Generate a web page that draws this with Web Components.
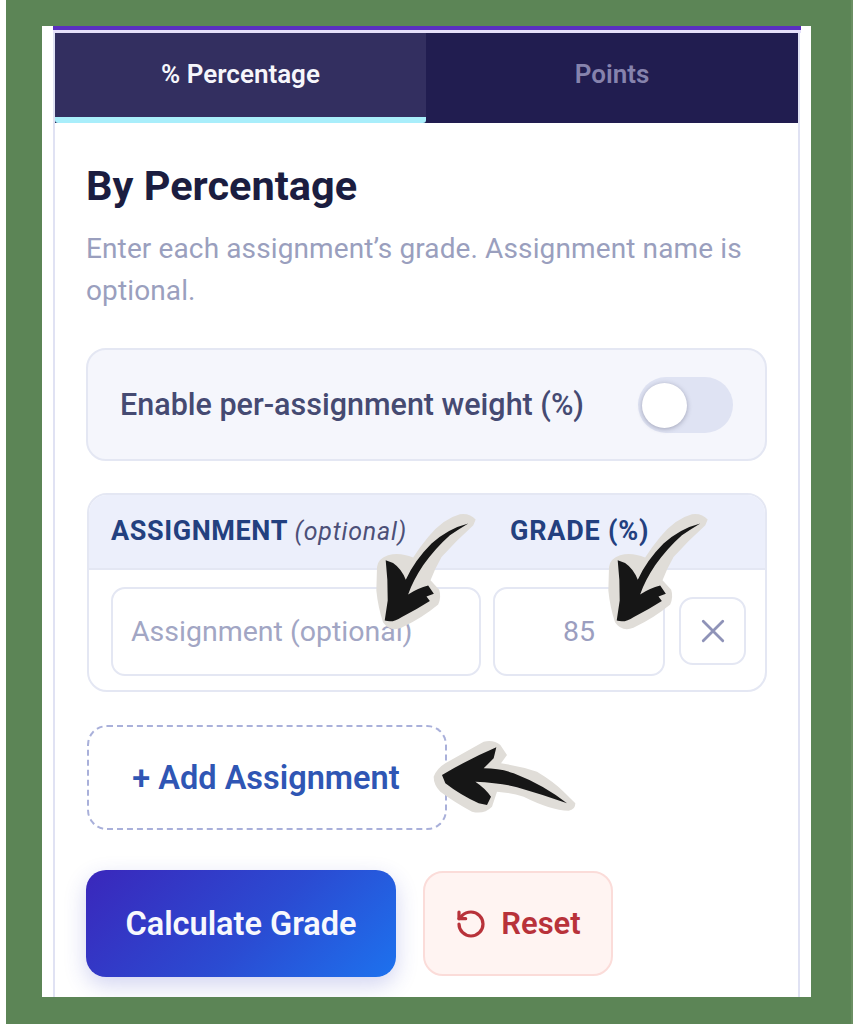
<!DOCTYPE html>
<html>
<head>
<meta charset="utf-8">
<title>Grade calculator</title>
<style>
  html, body { margin: 0; padding: 0; background: #5c8556; }
  body { width: 853px; height: 1024px; overflow: hidden; font-family: Roboto, "Liberation Sans", sans-serif; }
</style>
</head>
<body>
<photo-frame>
  <grade-card>
    <grade-tabs></grade-tabs>
    <percent-panel>
      <weight-toggle></weight-toggle>
      <assignment-table></assignment-table>
      <add-assignment></add-assignment>
      <grade-actions></grade-actions>
    </percent-panel>
  </grade-card>
  <scrawl-arrow kind="down" style="left:367px;top:510px"></scrawl-arrow>
  <scrawl-arrow kind="down" style="left:599px;top:510px"></scrawl-arrow>
  <scrawl-arrow kind="left" style="left:426px;top:740px"></scrawl-arrow>
</photo-frame>

<script>
// small helper, every element below just sets its own shadow html
class Base extends HTMLElement {
  constructor() {
    super();
    this.attachShadow({ mode: 'open' });
    this.shadowRoot.innerHTML = this.markup();
  }
}

// green photo border + white sheet
class PhotoFrame extends Base {
  markup() {
    return `<style>
      :host { display: block; position: relative; box-sizing: border-box; width: 853px; height: 1024px;
              border-left: 6px solid #fff; border-right: 2px solid #6b8f63; padding: 26px 40px 27px 36px; background: #5c8556; }
      .sheet { height: 100%; box-sizing: border-box; background: #fff; padding: 0 10px 0 11px; overflow: hidden; }
    </style><div class="sheet"><slot></slot></div>`;
  }
}

class GradeCard extends Base {
  markup() {
    return `<style>
      :host { display: block; height: 100%; }
      .bar { height: 4px; background: #5a2fc0; }
      .line { height: 3px; background: #e6e0fa; }
      .card { margin-right: 1px; height: 100%; box-sizing: border-box; border-left: 2px solid #e0e2f3; border-right: 2px solid #e0e2f3; background: #fff; }
    </style><div class="bar"></div><div class="line"></div><div class="card"><slot></slot></div>`;
  }
}

class GradeTabs extends Base {
  markup() {
    return `<style>
      :host { display: grid; grid-template-columns: 371px 1fr; height: 90px; background: #211d50; font-size: 26px; font-weight: 600; }
      div { display: flex; align-items: center; justify-content: center; box-sizing: border-box; }
      .active { background: #332f60; color: #f6f6fb; border-bottom: 6px solid #a9eefb; border-radius: 0 0 3px 3px; padding-bottom: 2px; }
      .other { color: #8683ad; padding-bottom: 8px; }
    </style><div class="active">% Percentage</div><div class="other">Points</div>`;
  }
}

class PercentPanel extends Base {
  markup() {
    return `<style>
      :host { display: block; padding: 38px 31px 0; color: #1b1d40; }
      h2 { margin: 0; font-size: 41.5px; line-height: 50px; font-weight: 700; }
      p { margin: 17px 0 36px; font-size: 28px; letter-spacing: .12px; line-height: 42px; color: #9a9fbe; }
      .stack { display: flex; flex-direction: column; }
    </style>
    <h2>By Percentage</h2>
    <p>Enter each assignment’s grade. Assignment name is optional.</p>
    <div class="stack"><slot></slot></div>`;
  }
}

class WeightToggle extends Base {
  markup() {
    return `<style>
      :host { display: flex; align-items: center; justify-content: space-between; box-sizing: border-box; height: 113px;
              border: 2px solid #e4e7f3; border-radius: 20px; background: #f5f6fc; padding: 0 32px 0 32px; }
      span { font-size: 30.5px; font-weight: 500; color: #454a72; }
      .track { position: relative; width: 95px; height: 56px; border-radius: 28px; background: #dfe3f3; }
      .knob { position: absolute; left: 4px; top: 6px; width: 45px; height: 45px; border-radius: 50%; background: #fff; box-shadow: 0 1px 5px rgba(40,40,70,.35); }
    </style><span>Enable per-assignment weight (%)</span><div class="track"><div class="knob"></div></div>`;
  }
}

class AssignmentTable extends Base {
  markup() {
    return `<style>
      :host { display: block; box-sizing: border-box; margin: 32px 0 33px 1px; height: 199px; border: 2px solid #e4e7f3; border-radius: 20px; overflow: hidden; background: #fff; }
      .cols { display: grid; grid-template-columns: 370px 172px 69px; column-gap: 12px; padding-left: 22px; }
      .head { height: 75px; box-sizing: border-box; padding-bottom: 2px; background: #eceffb; border-bottom: 2px solid #e4e7f3; align-items: center; font-size: 27px; font-weight: 700; color: #23407f; letter-spacing: .6px; }
      .head i { font-weight: 400; font-size: 25px; color: #4c5078; letter-spacing: .8px; }
      .head .grade { padding-left: 17px; letter-spacing: .8px; white-space: nowrap; }
      .row { padding-top: 17px; align-items: start; column-gap: 12px; }
      .box { box-sizing: border-box; height: 89px; border: 2px solid #e4e7f3; border-radius: 14px; display: flex; align-items: center; font-size: 28.5px; color: #a2a6c4; white-space: nowrap; }
      .name { padding-left: 18px; }
      .num { justify-content: center; color: #9b9ebf; }
      .del { height: 68px; margin: 10px 0 0 2px; justify-content: center; }
      svg { width: 26px; height: 26px; stroke: #8f93b8; stroke-width: 2.6; fill: none; stroke-linecap: round; }
    </style>
    <div class="cols head"><div>ASSIGNMENT <i>(optional)</i></div><div class="grade">GRADE (%)</div></div>
    <div class="cols row">
      <div class="box name">Assignment (optional)</div>
      <div class="box num">85</div>
      <div class="box del"><svg viewBox="0 0 24 24"><path d="M3 3 21 21M21 3 3 21"/></svg></div>
    </div>`;
  }
}

class AddAssignment extends Base {
  markup() {
    return `<style>
      :host { display: flex; align-items: center; justify-content: center; box-sizing: border-box; width: 360px; height: 105px; margin: 0 0 40px 1px; padding-right: 2px;
              border: 2px dashed #a9b0da; border-radius: 20px; font-size: 32.5px; font-weight: 600; color: #2f56b4; }
    </style>+ Add Assignment`;
  }
}

class GradeActions extends Base {
  markup() {
    return `<style>
      :host { display: flex; gap: 27px; align-items: center; }
      .calc { display: flex; align-items: center; justify-content: center; width: 310px; height: 107px; border-radius: 20px; color: #f7f8fd; font-size: 32.5px; font-weight: 600;
              background: linear-gradient(135deg, #3a27bb 0%, #2b4bd2 55%, #1d72ee 100%); box-shadow: 0 8px 22px rgba(50,60,190,.22); }
      .reset { display: flex; align-items: center; justify-content: center; gap: 14px; box-sizing: border-box; width: 190px; height: 105px; border: 2px solid #fbdcd9; border-radius: 20px; background: #fff4f2; color: #b8323a; font-size: 31px; font-weight: 600; }
      svg { width: 32px; height: 32px; stroke: #b8323a; stroke-width: 2.4; fill: none; stroke-linecap: round; stroke-linejoin: round; }
    </style>
    <div class="calc">Calculate Grade</div>
    <div class="reset"><svg viewBox="0 0 24 24"><path d="M3 12a9 9 0 1 0 9-9 9.75 9.75 0 0 0-6.74 2.74L3 8"/><path d="M3 3v5h5"/></svg>Reset</div>`;
  }
}

// hand drawn stickers stuck over the screenshot
const ARROWS = {
  down: {
    w: 107, h: 124, box: '40 30 320 370',
    paper: 'M347 58Q330 38 300 42Q250 55 205 110Q180 140 160 172Q120 155 85 165Q55 175 52 200L50 270Q55 320 70 365Q90 395 125 382Q190 350 235 312Q245 290 238 268L212 240Q225 205 245 170Q290 120 340 75Z',
    ink: 'M325 70Q265 85 215 130Q165 180 138 238Q125 205 100 188L78 180Q85 240 84 300L75 360Q100 368 125 350Q170 328 210 302L200 288 222 280 205 255Q175 262 145 282Q160 240 190 195Q225 145 270 105Q300 85 325 70Z'
  },
  left: {
    w: 145, h: 75, box: '1085 120 435 225',
    paper: 'M1090 230Q1100 205 1125 190L1240 125Q1270 118 1290 135L1310 165 1292 190Q1350 198 1400 215Q1450 245 1480 275L1515 310Q1515 330 1495 332Q1440 330 1360 290Q1320 278 1280 275L1265 320Q1240 345 1205 335Q1150 305 1110 275Q1090 255 1090 230Z',
    ink: 'M1115 225Q1190 180 1278 142L1270 175 1240 205Q1290 205 1330 220Q1420 255 1490 310Q1420 285 1340 262Q1290 248 1215 245Q1245 265 1262 290L1250 315 1225 310Q1170 285 1125 250Z'
  }
};

class ScrawlArrow extends Base {
  markup() {
    const a = ARROWS[this.getAttribute('kind')];
    return `<style>
      :host { position: absolute; display: block; width: ${a.w}px; height: ${a.h}px; }
      svg { display: block; width: 100%; height: 100%; }
    </style>
    <svg viewBox="${a.box}"><path d="${a.paper}" fill="#e0ddd8"/><path d="${a.ink}" fill="#161616"/></svg>`;
  }
}

customElements.define('photo-frame', PhotoFrame);
customElements.define('grade-card', GradeCard);
customElements.define('grade-tabs', GradeTabs);
customElements.define('percent-panel', PercentPanel);
customElements.define('weight-toggle', WeightToggle);
customElements.define('assignment-table', AssignmentTable);
customElements.define('add-assignment', AddAssignment);
customElements.define('grade-actions', GradeActions);
customElements.define('scrawl-arrow', ScrawlArrow);
</script>
</body>
</html>
